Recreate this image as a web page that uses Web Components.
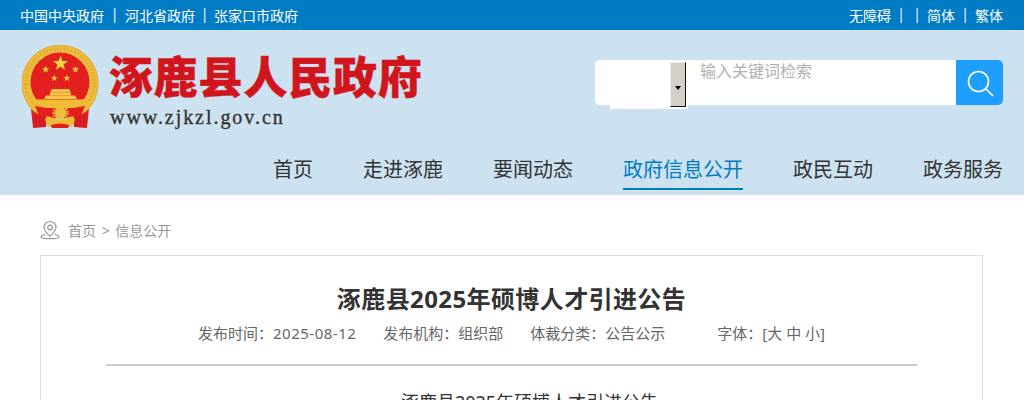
<!DOCTYPE html>
<html lang="zh-CN">
<head>
<meta charset="utf-8">
<title>涿鹿县人民政府</title>
<style>
html, body { margin: 0; background: #fff; overflow: hidden; }
body { font-family: "Noto Sans", "Noto Sans CJK SC", sans-serif; }
</style>
</head>
<body>
<gov-page>
    <gov-topbar slot="top"></gov-topbar>
    <gov-masthead slot="head"></gov-masthead>
    <gov-nav slot="head"></gov-nav>
    <gov-crumb slot="main"></gov-crumb>
    <gov-article slot="main"></gov-article>
</gov-page>

<script>
class GovPage extends HTMLElement {
    constructor() {
        super();
        this.attachShadow({ mode: 'open' }).innerHTML = `
            <style>
            :host { display: block; height: 400px; overflow: hidden; }
            .head { background: #cde2f1; height: 165px; }
            .main { padding: 0 41px 0 40px; }
            </style>
            <slot name="top"></slot>
            <div class="head"><slot name="head"></slot></div>
            <div class="main"><slot name="main"></slot></div>
        `;
    }
}

class GovTopbar extends HTMLElement {
    constructor() {
        super();
        this.attachShadow({ mode: 'open' }).innerHTML = `
            <style>
            :host {
                display: flex;
                justify-content: space-between;
                align-items: center;
                height: 30px;
                padding: 0 21px 0 20px;
                background: #007cc4;
                color: #fff;
                font-size: 14px;
            }
            .links { display: flex; align-items: center; }
            i {
                font: normal 16px/20px "Liberation Sans", sans-serif;
                color: #cbe4f5;
                width: 21px;
                text-align: center;
            }
            i.n { width: 19px; }
            i.wide { width: 20px; }
            i.gap { width: 12px; text-align: left; padding-left: 4px; }
            </style>
            <div class="links">
                <span>中国中央政府</span><i>|</i><span>河北省政府</span><i class="n">|</i><span>张家口市政府</span>
            </div>
            <div class="links">
                <span>无障碍</span><i class="wide">|</i><i class="gap">|</i><span>简体</span><i class="wide">|</i><span>繁体</span>
            </div>
        `;
    }
}

class GovEmblem extends HTMLElement {
    constructor() {
        super();
        this.attachShadow({ mode: 'open' }).innerHTML = `
            <style>
            :host { display: block; width: 78px; height: 84px; flex: none; }
            svg { display: block; }
            </style>
            <svg width="78" height="84" viewBox="22 45 78 84">
                <defs>
                    <polygon id="star" points="0,-10 2.35,-3.1 9.5,-3.1 3.8,1.2 5.9,8.1 0,4 -5.9,8.1 -3.8,1.2 -9.5,-3.1 -2.35,-3.1"/>
                </defs>
                <!-- wheat ring -->
                <path d="M40 116C28 109 22 96 22 83 22 62 39 46 57 45.5L60 44.5 63 45.5C81 46 98 62 98 83 98 96 92 109 80 116z" fill="#eebc3c" stroke="#d99f2c" stroke-width=".8"/>
                <path d="M36 107A34 34 0 1 1 84 107" fill="none" stroke="#d9a12e" stroke-width="3" stroke-dasharray="1 2.5"/>
                <circle cx="60" cy="82" r="29.5" fill="#e4201f"/>
                <!-- stars -->
                <g fill="#f6d343">
                    <use href="#star" transform="translate(60.5 63.5) scale(.8)"/>
                    <use href="#star" transform="translate(45.7 69.5) scale(.38)"/>
                    <use href="#star" transform="translate(75.5 69.5) scale(.38)"/>
                    <use href="#star" transform="translate(54.3 78) scale(.36)"/>
                    <use href="#star" transform="translate(66.8 78) scale(.36)"/>
                </g>
                <!-- gate -->
                <g fill="#f3c64a">
                    <path d="M52 89h17l2 3.5H50z"/>
                    <rect x="50" y="92.5" width="21" height="3"/>
                    <path d="M46 95.5h29l2 3.5H44z"/>
                </g>
                <!-- band, swag -->
                <path d="M34 99.5H86L90 105Q60 112 30 105z" fill="#f0bc38"/>
                <path d="M35 106Q60 112 85 106L80 118H40z" fill="#e4201f"/>
                <!-- gear -->
                <circle cx="60.5" cy="113" r="6.6" fill="none" stroke="#eebc3c" stroke-width="3" stroke-dasharray="1.6 1.2"/>
                <circle cx="60.5" cy="113" r="5.6" fill="#eebc3c"/>
                <!-- ribbons -->
                <path d="M31 109Q37 115 47 117L46 127 33 128z" fill="#dc1f25"/>
                <path d="M89 109Q83 115 73 117L74 127 87 128z" fill="#dc1f25"/>
                <path d="M36 114l-.5 13M40 116v11M43.5 117v9M84 114l.5 13M80 116v11M76.5 117v9" stroke="#c0171c" stroke-width=".7"/>
                <!-- bow -->
                <path d="M47 116L60 120 73 116 75 120 72 127 60 124 48 127 45 120z" fill="#f0bc38"/>
                <path d="M50 123.5H70L68 128H52z" fill="#e4201f"/>
                <path d="M47 118L60 121 73 118 71 125.5 60 123 49 125.5z" fill="#f0bc38"/>
            </svg>
        `;
    }
}

class GovSearch extends HTMLElement {
    constructor() {
        super();
        this.attachShadow({ mode: 'open' }).innerHTML = `
            <style>
            :host {
                display: flex;
                width: 408px;
                height: 45px;
                background: #fff;
                border-radius: 5px;
            }
            .select {
                flex: none;
                display: flex;
                justify-content: flex-end;
                width: 78px;
                height: 49px;
                margin-left: 15px;
                padding: 2px 2px 2px 0;
                box-sizing: border-box;
                background: #fff;
            }
            .arrow {
                display: flex;
                align-items: center;
                justify-content: center;
                width: 16px;
                box-sizing: border-box;
                padding-top: 3px;
                background: #d4d0c8;
                border: 1px solid;
                border-color: #ededed #111 #111 #ededed;
            }
            .arrow::after {
                content: "";
                border: 3px solid transparent;
                border-top: 4px solid #000;
                border-bottom: 0;
                margin-top: 4px;
            }
            .hint {
                flex: 1;
                padding: 0 0 0 12px;
                color: #b0b0b0;
                font-size: 16px;
                line-height: 22px;
            }
            .btn {
                flex: none;
                display: flex;
                align-items: center;
                justify-content: center;
                width: 47px;
                background: #1e9fff;
                border-radius: 0 5px 5px 0;
            }
            svg { display: block; }
            </style>
            <div class="select"><div class="arrow"></div></div>
            <div class="hint">输入关键词检索</div>
            <div class="btn">
                <svg width="28" height="28" viewBox="0 0 28 28" fill="none" stroke="#fff" stroke-width="1.6" stroke-linecap="round">
                    <circle cx="12.5" cy="12.5" r="10"/>
                    <path d="M20 20l6.5 6.5"/>
                </svg>
            </div>
        `;
    }
}

class GovMasthead extends HTMLElement {
    constructor() {
        super();
        this.attachShadow({ mode: 'open' }).innerHTML = `
            <style>
            :host {
                display: flex;
                justify-content: space-between;
                height: 120px;
                padding: 15px 21px 0 22px;
                box-sizing: border-box;
            }
            .brand { display: flex; gap: 10px; }
            .name {
                color: #d0161c;
                font: 900 44px/50px "Noto Sans CJK SC", sans-serif;
                letter-spacing: .8px;
                margin: 5px 0 0 -1px;
                -webkit-text-stroke: .4px #d0161c;
            }
            .url {
                color: #333;
                font: 20px/20px "Liberation Serif", serif;
                letter-spacing: 1.95px;
                margin-top: 7px;
                -webkit-text-stroke: .35px #333;
            }
            .search { padding-top: 15px; }
            </style>
            <div class="brand">
                <gov-emblem></gov-emblem>
                <div>
                    <div class="name">涿鹿县人民政府</div>
                    <div class="url">www.zjkzl.gov.cn</div>
                </div>
            </div>
            <div class="search"><gov-search></gov-search></div>
        `;
    }
}

class GovNav extends HTMLElement {
    constructor() {
        super();
        const items = ['首页', '走进涿鹿', '要闻动态', '政府信息公开', '政民互动', '政务服务'];
        this.attachShadow({ mode: 'open' }).innerHTML = `
            <style>
            :host {
                display: flex;
                justify-content: flex-end;
                gap: 50px;
                padding-right: 21px;
                color: #333;
                font-size: 20px;
                line-height: 40px;
            }
            a { display: block; height: 40px; }
            a.on { color: #007cc4; height: 38px; border-bottom: 2px solid #007cc4; }
            </style>
            ${items.map((t, i) => `<a class="${i === 3 ? 'on' : ''}">${t}</a>`).join('')}
        `;
    }
}

class GovCrumb extends HTMLElement {
    constructor() {
        super();
        this.attachShadow({ mode: 'open' }).innerHTML = `
            <style>
            :host {
                display: flex;
                align-items: center;
                gap: 8px;
                height: 60px;
                padding-top: 10px;
                box-sizing: border-box;
                color: #999;
                font-size: 14px;
            }
            span { word-spacing: 2px; margin-top: -1px; }
            svg { display: block; }
            </style>
            <svg width="20" height="20" viewBox="0 0 20 20" fill="none" stroke="#999" stroke-width="1.2">
                <path d="M10 1.5c-3.6 0-6 2.7-6 5.8 0 3.6 3.6 6.8 6 9 2.4-2.2 6-5.4 6-9 0-3.1-2.4-5.8-6-5.8z"/>
                <circle cx="10" cy="7.5" r="2.3"/>
                <path d="M5 14.5c-2.4.5-4 1.3-4 2.4 0 1.2 3 1.8 9 1.8s9-.6 9-1.8c0-1.100-1.600-1.900-4-2.400" stroke-linecap="round"/>
            </svg>
            <span>首页 &gt; 信息公开</span>
        `;
    }
}

class GovArticle extends HTMLElement {
    constructor() {
        super();
        this.attachShadow({ mode: 'open' }).innerHTML = `
            <style>
            :host {
                display: block;
                border: 1px solid #ddd;
                padding: 0 65px;
                height: 400px;
            }
            h1 {
                margin: 0;
                padding-top: 24px;
                color: #333;
                font-size: 24px;
                line-height: 38px;
                font-weight: bold;
                letter-spacing: .4px;
                text-align: center;
            }
            .meta {
                display: flex;
                height: 24px;
                padding: 3px 0 0 92px;
                color: #666;
                font-size: 15px;
                line-height: 24px;
                white-space: nowrap;
            }
            .meta span + span { margin-left: 27px; }
            .meta span.font { margin-left: 52px; }
            .meta em { font-style: normal; letter-spacing: .5px; }
            hr {
                margin: 19px 0 0;
                border: 0;
                border-top: 2px solid #ccc;
            }
            p {
                margin: 20px 0 0;
                color: #333;
                font-size: 18px;
                line-height: 32px;
                text-align: center;
                text-indent: 2em;
            }
            </style>
            <h1>涿鹿县2025年硕博人才引进公告</h1>
            <div class="meta">
                <span>发布时间：<em>2025-08-12</em></span>
                <span>发布机构：组织部</span>
                <span>体裁分类：公告公示</span>
                <span class="font">字体：[大 中 小]</span>
            </div>
            <hr>
            <p>涿鹿县2025年硕博人才引进公告</p>
        `;
    }
}

customElements.define('gov-page', GovPage);
customElements.define('gov-topbar', GovTopbar);
customElements.define('gov-emblem', GovEmblem);
customElements.define('gov-search', GovSearch);
customElements.define('gov-masthead', GovMasthead);
customElements.define('gov-nav', GovNav);
customElements.define('gov-crumb', GovCrumb);
customElements.define('gov-article', GovArticle);
</script>
</body>
</html>
